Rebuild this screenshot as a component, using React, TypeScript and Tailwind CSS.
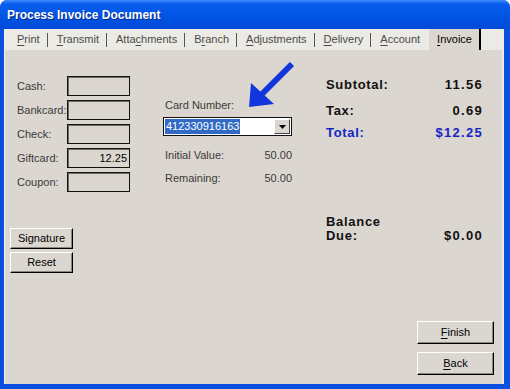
import React from 'react';

const TABS = [
  { label: 'Print', key: 0 },
  { label: 'Transmit', key: 0 },
  { label: 'Attachments', key: 4 },
  { label: 'Branch', key: 1 },
  { label: 'Adjustments', key: 0 },
  { label: 'Delivery', key: 0 },
  { label: 'Account', key: 0 },
];

const PAYMENTS = [
  { label: 'Cash:', value: '' },
  { label: 'Bankcard:', value: '' },
  { label: 'Check:', value: '' },
  { label: 'Giftcard:', value: '12.25' },
  { label: 'Coupon:', value: '' },
];

function Hotkey({ text, at }: { text: string; at: number }) {
  return (
    <>
      {text.slice(0, at)}
      <span className="underline underline-offset-2">{text[at]}</span>
      {text.slice(at + 1)}
    </>
  );
}

function Button({ children, className }: { children: React.ReactNode; className: string }) {
  return (
    <button
      className={`flex items-center justify-center bg-[#dbd7d0] border-t border-l border-t-white border-l-white border-r border-b border-r-black border-b-black shadow-[inset_-1px_-1px_0_#8a877f] text-[11px] font-normal tracking-normal text-black ${className}`}
    >
      {children}
    </button>
  );
}

export default function App() {
  return (
    <div className="w-[510px] h-[389px] bg-[#0a4fe0] rounded-t-[7px] flex flex-col font-['Liberation_Sans',Arial,sans-serif] overflow-hidden">
      {/* Title bar */}
      <div className="h-[29px] shrink-0 rounded-t-[7px] bg-[linear-gradient(to_bottom,#3d8cff_0%,#0a5cec_14%,#0055e5_55%,#0049d8_100%)] flex items-center pl-[7px]">
        <span className="text-white font-bold text-[12px] [text-shadow:1px_1px_0_#0a2a8a]">
          Process Invoice Document
        </span>
      </div>

      {/* Body */}
      <div className="flex-1 ml-[4px] mr-[6px] mb-[5px] bg-[#dbd7d0] flex flex-col border-l border-l-[#f3f1ea] border-r-2 border-r-[#eeece6]">
        {/* Tab strip */}
        <div className="h-[21px] shrink-0 bg-[#eceae4] flex items-center pl-[12px] text-[11px] text-[#4a4a4a]">
          {TABS.map((t, i) => (
            <React.Fragment key={t.label}>
              <span>
                <Hotkey text={t.label} at={t.key} />
              </span>
              {i < TABS.length - 1 && <span className="w-px h-[14px] bg-[#555] ml-[7px] mr-[9px]" />}
            </React.Fragment>
          ))}
          <div className="ml-[9px] h-full bg-[#dbd7d0] flex items-center pl-[8px] pr-[7px] text-black border-r-2 border-r-black">
            <Hotkey text="Invoice" at={0} />
          </div>
        </div>

        {/* Content */}
        <div className="relative flex-1 flex text-[11px] text-[#3a3a3a]">
          {/* Left column */}
          <div className="w-[158px] pl-[5px] flex flex-col">
            <div className="mt-[26px] ml-[7px] flex flex-col gap-[4px]">
              {PAYMENTS.map((p) => (
                <div key={p.label} className="flex items-center h-[20px]">
                  <span className="w-[50px]">{p.label}</span>
                  <div className="w-[63px] h-[20px] border border-[#111] shadow-[inset_1px_1px_0_#6f6c66] flex items-center justify-end pr-[2px] text-black">
                    {p.value}
                  </div>
                </div>
              ))}
            </div>
            <Button className="mt-[36px] w-[63px] h-[21px]">Signature</Button>
            <Button className="mt-[3px] w-[63px] h-[21px]">Reset</Button>
          </div>

          {/* Middle column */}
          <div className="w-[130px] flex flex-col">
            <span className="mt-[49px] pl-[2px] leading-[13px]">Card Number:</span>
            <div className="mt-[5px] w-[129px] h-[19px] bg-white border border-[#111] flex items-center">
              <span className="ml-px h-[15px] px-px bg-[#316ac5] text-white leading-[15px]">412330916163</span>
              <div className="ml-auto mr-px w-[16px] h-[15px] bg-[#dbd7d0] border-t border-l border-t-white border-l-white border-r border-b border-r-[#444] border-b-[#444] flex items-center justify-center">
                <svg width="7" height="4" viewBox="0 0 7 4">
                  <path d="M0 0h7L3.5 4z" fill="#000" />
                </svg>
              </div>
            </div>
            <div className="mt-[13px] pl-[2px] pr-px flex justify-between leading-[13px]">
              <span>Initial Value:</span>
              <span>50.00</span>
            </div>
            <div className="mt-[10px] pl-[2px] pr-px flex justify-between leading-[13px]">
              <span>Remaining:</span>
              <span>50.00</span>
            </div>
          </div>

          {/* Right column */}
          <div className="ml-[33px] w-[168px] flex flex-col pb-[9px] text-[13px] font-bold text-[#111]">
            <div className="w-[157px] mt-[27px] flex justify-between leading-[16px] tracking-[0.7px]">
              <span>Subtotal:</span>
              <span className="tracking-[1.3px]">11.56</span>
            </div>
            <div className="w-[157px] mt-[10px] flex justify-between leading-[16px] tracking-[0.7px]">
              <span>Tax:</span>
              <span className="tracking-[1.3px]">0.69</span>
            </div>
            <div className="w-[157px] mt-[6px] flex justify-between leading-[16px] tracking-[0.7px] text-[#1424c4]">
              <span>Total:</span>
              <span className="tracking-[1.3px]">$12.25</span>
            </div>
            <div className="w-[157px] mt-[74px] flex justify-between items-end leading-[14px] tracking-[0.7px]">
              <div className="flex flex-col">
                <span>Balance</span>
                <span>Due:</span>
              </div>
              <span className="tracking-[1.3px]">$0.00</span>
            </div>
            <div className="mt-auto flex flex-col items-end gap-[8px]">
              <Button className="w-[77px] h-[23px]">
                <Hotkey text="Finish" at={0} />
              </Button>
              <Button className="w-[77px] h-[23px]">
                <Hotkey text="Back" at={0} />
              </Button>
            </div>
          </div>

          {/* Pointer arrow */}
          <svg className="absolute left-0 top-0 pointer-events-none" width="500" height="334" viewBox="0 0 500 334">
            <g transform="translate(-4 -50)">
              <line x1="291" y1="64" x2="258" y2="97" stroke="#1236dc" strokeWidth="6" />
              <polygon points="248,107 250,83 273,104" fill="#1236dc" />
            </g>
          </svg>
        </div>
      </div>
    </div>
  );
}
